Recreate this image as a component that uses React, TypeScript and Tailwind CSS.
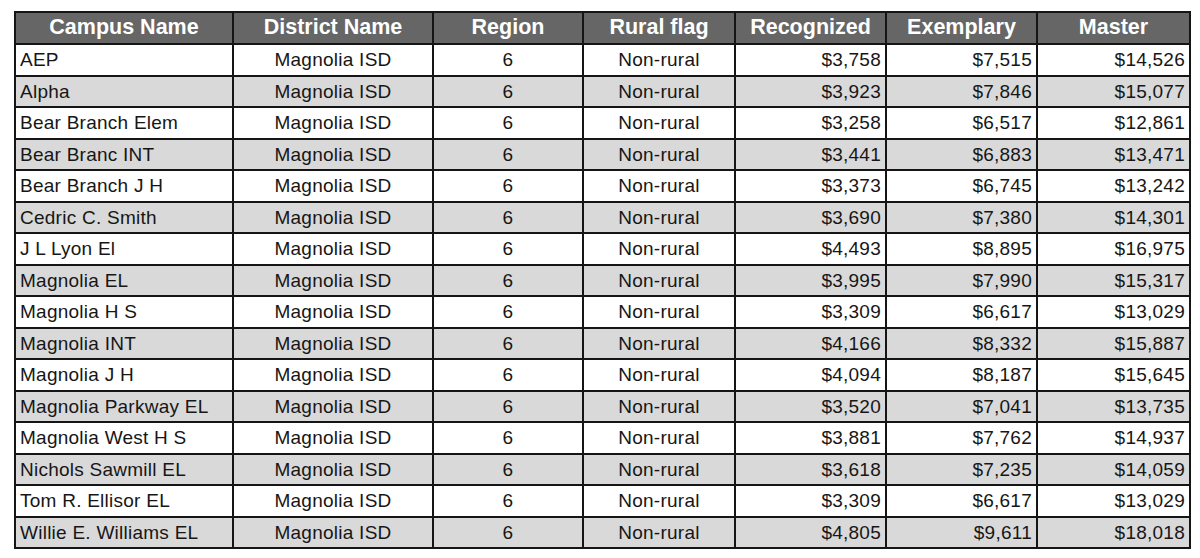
import React from "react";

const rows: [string, string, string, string][] = [
  ["AEP", "$3,758", "$7,515", "$14,526"],
  ["Alpha", "$3,923", "$7,846", "$15,077"],
  ["Bear Branch Elem", "$3,258", "$6,517", "$12,861"],
  ["Bear Branc INT", "$3,441", "$6,883", "$13,471"],
  ["Bear Branch J H", "$3,373", "$6,745", "$13,242"],
  ["Cedric C. Smith", "$3,690", "$7,380", "$14,301"],
  ["J L Lyon El", "$4,493", "$8,895", "$16,975"],
  ["Magnolia EL", "$3,995", "$7,990", "$15,317"],
  ["Magnolia H S", "$3,309", "$6,617", "$13,029"],
  ["Magnolia INT", "$4,166", "$8,332", "$15,887"],
  ["Magnolia J H", "$4,094", "$8,187", "$15,645"],
  ["Magnolia Parkway EL", "$3,520", "$7,041", "$13,735"],
  ["Magnolia West H S", "$3,881", "$7,762", "$14,937"],
  ["Nichols Sawmill EL", "$3,618", "$7,235", "$14,059"],
  ["Tom R. Ellisor EL", "$3,309", "$6,617", "$13,029"],
  ["Willie E. Williams EL", "$4,805", "$9,611", "$18,018"],
];

const headers = ["Campus Name", "District Name", "Region", "Rural flag", "Recognized", "Exemplary", "Master"];
const widths = [218, 200, 150, 152, 151, 151, 153];

export default function App() {
  return (
    <div
      className="w-[1200px] h-[558px] bg-white pl-[14px] pt-[11px]"
      style={{ fontFamily: '"Liberation Sans", Arial, sans-serif' }}
    >
      <table className="table-fixed border-collapse w-[1175px] text-[#161616]">
        <colgroup>
          {widths.map((w, i) => (
            <col key={i} style={{ width: w }} />
          ))}
        </colgroup>
        <thead>
          <tr className="h-[32px] bg-[#666666]">
            {headers.map((h) => (
              <th
                key={h}
                className="border-2 border-[#151515] text-white font-bold text-[21.5px] leading-none text-center p-0"
              >
                {h}
              </th>
            ))}
          </tr>
        </thead>
        <tbody className="tracking-[0.25px]">
          {rows.map((r, i) => (
            <tr key={r[0]} className={`h-[31.5px] ${i % 2 === 1 ? "bg-[#d9d9d9]" : "bg-white"}`}>
              <td className="border-2 border-[#151515] text-[19px] leading-none pl-[4px] text-left">{r[0]}</td>
              <td className="border-2 border-[#151515] text-[19px] leading-none text-center">Magnolia ISD</td>
              <td className="border-2 border-[#151515] text-[19px] leading-none text-center">6</td>
              <td className="border-2 border-[#151515] text-[19px] leading-none text-center">Non-rural</td>
              <td className="border-2 border-[#151515] text-[19px] leading-none text-right pr-[4px]">{r[1]}</td>
              <td className="border-2 border-[#151515] text-[19px] leading-none text-right pr-[4px]">{r[2]}</td>
              <td className="border-2 border-[#151515] text-[19px] leading-none text-right pr-[4px]">{r[3]}</td>
            </tr>
          ))}
        </tbody>
      </table>
    </div>
  );
}
